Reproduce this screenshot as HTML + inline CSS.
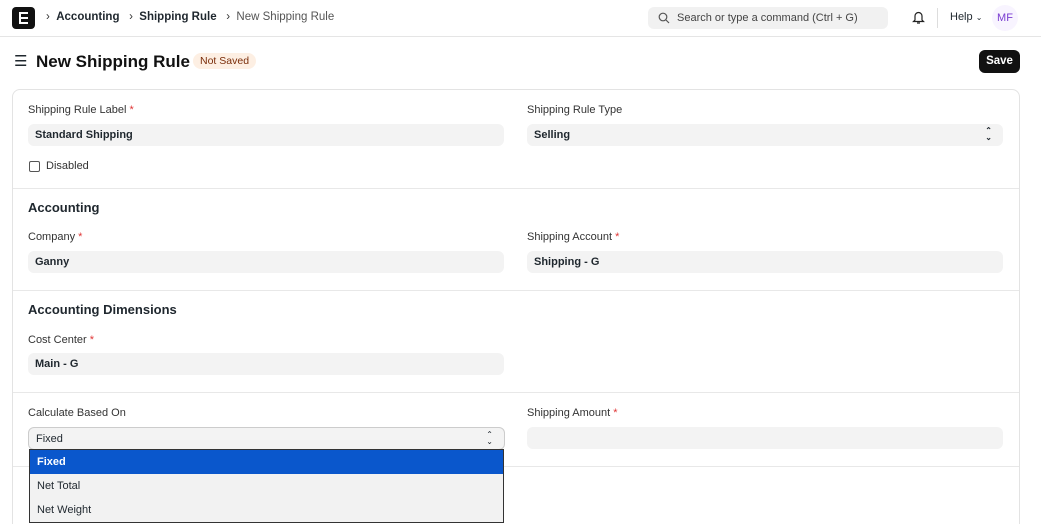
<!DOCTYPE html>
<html style="height:524px;overflow:hidden"><head><style>
*{box-sizing:border-box;margin:0;padding:0}
body{width:1041px;height:524px;overflow:hidden;background:#fff;font-family:"Liberation Sans",sans-serif;color:#1f272e;position:relative}
.a{position:absolute}
.lbl{position:absolute;font-size:11px;color:#333}
.req{color:#e03636}
.inp{position:absolute;height:22px;background:#f3f3f3;border-radius:6px;font-size:11px;font-weight:bold;padding:5px 7px;color:#1f272e}
.hr{position:absolute;left:13px;width:1006px;height:1px;background:#e8e8e8}
.sec{position:absolute;left:28px;font-size:13px;font-weight:bold}
.chev{position:absolute;right:11px;top:3px;font-size:8px;line-height:7px;text-align:center}
</style></head><body>
<div class="a" style="left:12px;top:7px;width:23px;height:22px;background:#111;border-radius:4px"></div>
<div class="a" style="left:19px;top:12px;width:9px;height:12px;border:2px solid #fff;border-right:none;"></div>
<div class="a" style="left:21px;top:17px;width:7px;height:2px;background:#fff"></div>
<div class="a" style="left:46px;top:11px;font-size:11.5px;color:#333">›&nbsp;&nbsp;<b style="color:#1f272e">Accounting</b>&nbsp;&nbsp;&nbsp;›&nbsp;&nbsp;<b style="color:#1f272e">Shipping Rule</b>&nbsp;&nbsp;&nbsp;›&nbsp;&nbsp;<span style="color:#555">New Shipping Rule</span></div>
<div class="a" style="left:648px;top:7px;width:240px;height:22px;background:#f1f1f1;border-radius:6px;font-size:11px;color:#444;padding:5px 0 0 29px">Search or type a command (Ctrl + G)</div>
<svg class="a" style="left:658px;top:12px" width="12" height="12" viewBox="0 0 12 12"><circle cx="5" cy="5" r="3.8" fill="none" stroke="#555" stroke-width="1.2"/><path d="M8 8l3 3" stroke="#555" stroke-width="1.2"/></svg>
<svg class="a" style="left:912px;top:10px" width="13" height="15" viewBox="0 0 13 15"><path d="M3 10V6a3.5 3.5 0 017 0v4l1.5 1.5h-10z M5 13h3" fill="none" stroke="#222" stroke-width="1.2"/></svg>
<div class="a" style="left:937px;top:8px;width:1px;height:20px;background:#ddd"></div>
<div class="a" style="left:950px;top:11px;font-size:11px">Help <span style="font-size:8px">⌄</span></div>
<div class="a" style="left:992px;top:5px;width:26px;height:26px;border-radius:50%;background:#f8f4ff;color:#7a3dd1;font-size:11px;text-align:center;padding-top:7px">MF</div>
<div class="a" style="left:0;top:36px;width:1041px;height:1px;background:#e5e5e5"></div>
<div class="a" style="left:14px;top:52px;font-size:15px">☰</div>
<div class="a" style="left:36px;top:52px;font-size:17px;font-weight:bold;color:#111">New Shipping Rule</div>
<div class="a" style="left:193px;top:53px;height:16px;padding:2px 7px;background:#fdefe3;color:#7a2d0a;border-radius:8px;font-size:10.5px">Not Saved</div>
<div class="a" style="left:979px;top:50px;width:41px;height:23px;background:#111;color:#fff;border-radius:6px;font-size:11.5px;font-weight:bold;text-align:center;padding-top:5px">Save</div>
<div class="a" style="left:12px;top:89px;width:1008px;height:450px;border:1px solid #e3e3e3;border-radius:8px"></div>
<div class="lbl" style="left:28px;top:104px">Shipping Rule Label <span class="req">*</span></div>
<div class="inp" style="left:28px;top:124px;width:476px">Standard Shipping</div>
<div class="lbl" style="left:527px;top:104px">Shipping Rule Type</div>
<div class="inp" style="left:527px;top:124px;width:476px">Selling<span class="chev">⌃<br>⌄</span></div>
<div class="a" style="left:29px;top:161px;width:11px;height:11px;border:1px solid #555;border-radius:2px"></div>
<div class="lbl" style="left:46px;top:160px">Disabled</div>
<div class="hr" style="top:188px"></div>
<div class="sec" style="top:200px">Accounting</div>
<div class="lbl" style="left:28px;top:231px">Company <span class="req">*</span></div>
<div class="inp" style="left:28px;top:251px;width:476px">Ganny</div>
<div class="lbl" style="left:527px;top:231px">Shipping Account <span class="req">*</span></div>
<div class="inp" style="left:527px;top:251px;width:476px">Shipping - G</div>
<div class="hr" style="top:290px"></div>
<div class="sec" style="top:302px">Accounting Dimensions</div>
<div class="lbl" style="left:28px;top:334px">Cost Center <span class="req">*</span></div>
<div class="inp" style="left:28px;top:353px;width:476px">Main - G</div>
<div class="hr" style="top:392px"></div>
<div class="lbl" style="left:28px;top:407px">Calculate Based On</div>
<div class="inp" style="left:28px;top:427px;width:477px;height:23px;border:1px solid #ccc;font-weight:normal;background:#f3f3f3;padding-top:5px">Fixed<span class="chev">⌃<br>⌄</span></div>
<div class="lbl" style="left:527px;top:407px">Shipping Amount <span class="req">*</span></div>
<div class="inp" style="left:527px;top:427px;width:476px"></div>
<div class="hr" style="top:466px"></div>
<div class="a" style="left:29px;top:449px;width:475px;height:74px;border:1px solid #333;background:#f2f2f2;font-size:11px">
<div style="height:24px;background:#0a57cc;color:#fff;padding:6px 7px;font-weight:bold">Fixed</div>
<div style="height:24px;padding:6px 7px">Net Total</div>
<div style="height:24px;padding:6px 7px">Net Weight</div>
</div>
</body></html>
